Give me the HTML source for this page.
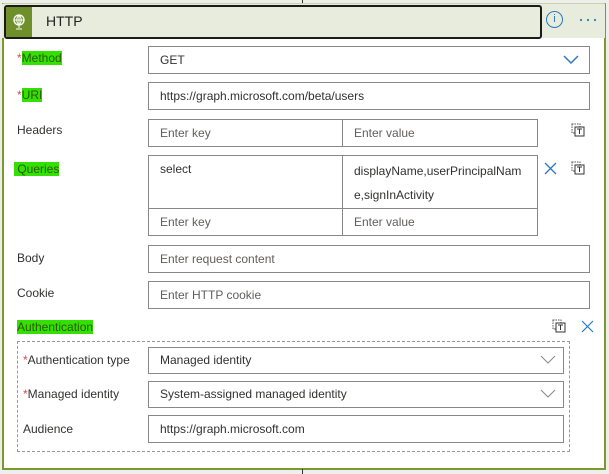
<!DOCTYPE html>
<html><head><meta charset="utf-8"><style>
body{margin:0;width:609px;height:474px;background:#eeeeee;font-family:"Liberation Sans",sans-serif;font-size:12px;color:#323130;position:relative;overflow:hidden}
.a{position:absolute}
.card{left:2px;top:3px;width:600px;height:464px;border:2px solid #7a9a2c;border-top:1px solid #c8d3a8;background:#fff}
.hdr{left:4px;top:5px;width:534px;height:30px;border:2px solid #1b1b1b;border-radius:3px;background:#e7ecdc}
.ico{left:6px;top:7px;width:26px;height:30px;background:#6f8f2a}
.box{border:1px solid #8a8886;background:#fff;box-sizing:border-box;padding-left:11px;line-height:26px}
.hl{background:#33e000;color:#2a5a00}
.ph{color:#605e5c}
.req{color:#e0474b}
</style></head><body>
<div class="a" style="left:302px;top:0;width:0;height:3px;border-left:1px solid #333"></div>
<div class="a card"></div>
<div class="a" style="left:2px;top:4px;width:603px;height:34px;background:#e7ecdc"></div>
<div class="a hdr"></div>
<div class="a ico"><svg width="26" height="30"><circle cx="13" cy="13" r="5" fill="none" stroke="#fff" stroke-width="1.3"/><path d="M8 13h10M13 8v10M13 8c-3 3-3 7 0 10M13 8c3 3 3 7 0 10M13 18v3M10 22h6" stroke="#fff" stroke-width="1" fill="none"/></svg></div>
<div class="a" style="left:46px;top:13px;font-size:14px;color:#222">HTTP</div>
<div class="a" style="left:546px;top:11px;width:15px;height:15px;border:1.3px solid #2b78c5;border-radius:50%;color:#2b78c5;font-size:11px;text-align:center;line-height:15px">i</div>
<svg class="a" style="left:579px;top:18px" width="20" height="4"><circle cx="2" cy="2" r="1.1" fill="#2b78c5"/><circle cx="9" cy="2" r="1.1" fill="#2b78c5"/><circle cx="16" cy="2" r="1.1" fill="#2b78c5"/></svg>

<div class="a" style="left:17px;top:51px"><span class="req">*</span><span class="hl">Method</span></div>
<div class="a box" style="left:148px;top:46px;width:442px;height:28px">GET</div>
<svg class="a" style="left:563px;top:55px" width="16" height="10"><path d="M1 1l7 7 7-7" stroke="#2b78c5" stroke-width="1.5" fill="none"/></svg>
<div class="a" style="left:17px;top:88px"><span class="req">*</span><span class="hl">URI</span></div>
<div class="a box" style="left:148px;top:82px;width:442px;height:28px">https://graph.microsoft.com/beta/users</div>

<div class="a" style="left:17px;top:123px">Headers</div>
<div class="a box ph" style="left:148px;top:119px;width:195px;height:28px">Enter key</div>
<div class="a box ph" style="left:342px;top:119px;width:196px;height:28px">Enter value</div>

<div class="a" style="left:14px;top:162px"><span class="hl">&nbsp;Queries</span></div>
<div class="a box" style="left:148px;top:155px;width:195px;height:54px">select</div>
<div class="a box" style="left:342px;top:155px;width:196px;height:54px;line-height:24px;padding-top:3px">displayName,userPrincipalNam<br>e,signInActivity</div>
<div class="a box ph" style="left:148px;top:208px;width:195px;height:28px">Enter key</div>
<div class="a box ph" style="left:342px;top:208px;width:196px;height:28px">Enter value</div>
<svg class="a" style="left:544px;top:162px" width="13" height="13"><path d="M1 1l11 11M12 1L1 12" stroke="#2b78c5" stroke-width="1.3"/></svg>

<div class="a" style="left:17px;top:251px">Body</div>
<div class="a box ph" style="left:148px;top:245px;width:442px;height:28px">Enter request content</div>
<div class="a" style="left:17px;top:286px">Cookie</div>
<div class="a box ph" style="left:148px;top:281px;width:442px;height:28px">Enter HTTP cookie</div>

<div class="a" style="left:17px;top:320px"><span class="hl">Authentication</span></div>
<svg class="a" style="left:581px;top:320px" width="13" height="13"><path d="M1 1l11 11M12 1L1 12" stroke="#2b78c5" stroke-width="1.2"/></svg>
<div class="a" style="left:17px;top:341px;width:553px;height:111px;border:1px dashed #999;box-sizing:border-box"></div>
<div class="a" style="left:23px;top:353px"><span class="req">*</span>Authentication type</div>
<div class="a box" style="left:148px;top:347px;width:416px;height:27px;line-height:25px">Managed identity</div>
<div class="a" style="left:23px;top:387px"><span class="req">*</span>Managed identity</div>
<div class="a box" style="left:148px;top:381px;width:416px;height:27px;line-height:25px">System-assigned managed identity</div>
<svg class="a" style="left:540px;top:355px" width="16" height="10"><path d="M1 1l7 7 7-7" stroke="#888" stroke-width="1" fill="none"/></svg>
<svg class="a" style="left:540px;top:389px" width="16" height="10"><path d="M1 1l7 7 7-7" stroke="#888" stroke-width="1" fill="none"/></svg>
<div class="a" style="left:23px;top:422px">Audience</div>
<div class="a box" style="left:148px;top:415px;width:416px;height:28px">https://graph.microsoft.com</div>
<div class="a" style="left:302px;top:469px;width:0;height:5px;border-left:1px solid #333"></div>

<svg class="a" style="left:571px;top:123px" width="14" height="14"><rect x="1" y="1" width="8" height="9" fill="none" stroke="#555" stroke-dasharray="1.5 1"/><rect x="4" y="4" width="9" height="9" fill="#fff" stroke="#333"/><path d="M6 6h5M8.5 6v5" stroke="#333"/></svg>
<svg class="a" style="left:571px;top:161px" width="14" height="14"><rect x="1" y="1" width="8" height="9" fill="none" stroke="#555" stroke-dasharray="1.5 1"/><rect x="4" y="4" width="9" height="9" fill="#fff" stroke="#333"/><path d="M6 6h5M8.5 6v5" stroke="#333"/></svg>
<svg class="a" style="left:552px;top:319px" width="14" height="14"><rect x="1" y="1" width="8" height="9" fill="none" stroke="#555" stroke-dasharray="1.5 1"/><rect x="4" y="4" width="9" height="9" fill="#fff" stroke="#333"/><path d="M6 6h5M8.5 6v5" stroke="#333"/></svg>
</body></html>
